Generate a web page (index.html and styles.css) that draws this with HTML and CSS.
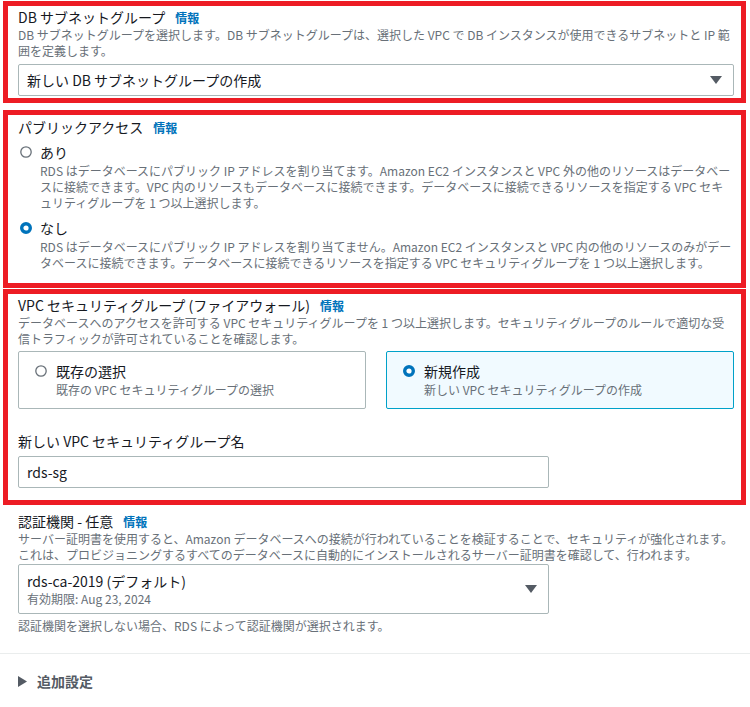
FILE: index.html
```html
<!DOCTYPE html>
<html lang="ja">
<head>
<meta charset="utf-8">
<title>接続</title>
<link rel="stylesheet" href="styles.css">
</head>
<body>
<div class="page">
  <section class="field hl hl-subnet">
    <div class="label">DB サブネットグループ<a class="info">情報</a></div>
    <div class="desc">DB サブネットグループを選択します。DB サブネットグループは、選択した VPC で DB インスタンスが使用できるサブネットと IP 範囲を定義します。</div>
    <div class="select select-wide">
      <span class="value">新しい DB サブネットグループの作成</span>
      <svg class="caret" width="12" height="8" viewBox="0 0 12 8"><polygon points="0,0 12,0 6,8" fill="#545b64"/></svg>
    </div>
  </section>

  <section class="field hl hl-public">
    <div class="label">パブリックアクセス<a class="info">情報</a></div>
    <div class="radio radio-first">
      <svg class="radio-icon" width="12" height="12" viewBox="0 0 12 12"><circle cx="6" cy="6" r="5.2" fill="#fff" stroke="#687078" stroke-width="1.3"/></svg>
      <div class="radio-body">
        <div class="radio-label">あり</div>
        <div class="desc radio-desc">RDS はデータベースにパブリック IP アドレスを割り当てます。Amazon EC2 インスタンスと VPC 外の他のリソースはデータベースに接続できます。VPC 内のリソースもデータベースに接続できます。データベースに接続できるリソースを指定する VPC セキュリティグループを 1 つ以上選択します。</div>
      </div>
    </div>
    <div class="radio radio-next">
      <svg class="radio-icon" width="12" height="12" viewBox="0 0 12 12"><circle cx="6" cy="6" r="4.3" fill="#fff" stroke="#0073bb" stroke-width="3.4"/></svg>
      <div class="radio-body">
        <div class="radio-label">なし</div>
        <div class="desc radio-desc">RDS はデータベースにパブリック IP アドレスを割り当てません。Amazon EC2 インスタンスと VPC 内の他のリソースのみがデータベースに接続できます。データベースに接続できるリソースを指定する VPC セキュリティグループを 1 つ以上選択します。</div>
      </div>
    </div>
  </section>

  <section class="field hl hl-sg">
    <div class="label">VPC セキュリティグループ (ファイアウォール)<a class="info">情報</a></div>
    <div class="desc">データベースへのアクセスを許可する VPC セキュリティグループを 1 つ以上選択します。セキュリティグループのルールで適切な受信トラフィックが許可されていることを確認します。</div>
    <div class="tiles">
      <div class="tile">
        <svg class="radio-icon" width="12" height="12" viewBox="0 0 12 12"><circle cx="6" cy="6" r="5.2" fill="#fff" stroke="#687078" stroke-width="1.3"/></svg>
        <div class="radio-body">
          <div class="radio-label">既存の選択</div>
          <div class="tile-desc">既存の VPC セキュリティグループの選択</div>
        </div>
      </div>
      <div class="tile tile-selected">
        <svg class="radio-icon" width="12" height="12" viewBox="0 0 12 12"><circle cx="6" cy="6" r="4.3" fill="#fff" stroke="#0073bb" stroke-width="3.4"/></svg>
        <div class="radio-body">
          <div class="radio-label">新規作成</div>
          <div class="tile-desc">新しい VPC セキュリティグループの作成</div>
        </div>
      </div>
    </div>
    <div class="label label-sub">新しい VPC セキュリティグループ名</div>
    <div class="input">rds-sg</div>
  </section>

  <section class="field plain">
    <div class="label">認証機関 - 任意<a class="info">情報</a></div>
    <div class="desc">サーバー証明書を使用すると、Amazon データベースへの接続が行われていることを検証することで、セキュリティが強化されます。<br>これは、プロビジョニングするすべてのデータベースに自動的にインストールされるサーバー証明書を確認して、行われます。</div>
    <div class="select select-ca">
      <div class="select-text">
        <div class="value">rds-ca-2019 (デフォルト)</div>
        <div class="value-sub">有効期限: Aug 23, 2024</div>
      </div>
      <svg class="caret" width="12" height="8" viewBox="0 0 12 8"><polygon points="0,0 12,0 6,8" fill="#545b64"/></svg>
    </div>
    <div class="constraint">認証機関を選択しない場合、RDS によって認証機関が選択されます。</div>
  </section>

  <div class="expander">
    <svg class="expander-icon" width="9" height="11" viewBox="0 0 9 11"><polygon points="0,0 9,5.5 0,11" fill="#545b64"/></svg>
    <span class="expander-label">追加設定</span>
  </div>
</div>
</body>
</html>
```

FILE: styles.css
```css
* {
  box-sizing: border-box;
}

html, body {
  margin: 0;
  padding: 0;
  background: #ffffff;
}

body {
  font-family: "Noto Sans CJK JP", "Noto Sans", sans-serif;
  font-size: 14px;
  color: #16191f;
  width: 750px;
  height: 707px;
  overflow: hidden;
}

.page {
  display: flex;
  flex-direction: column;
  padding-top: 1px;
}

.field {
  display: flex;
  flex-direction: column;
}

.hl {
  border: 5px solid #ed1c24;
  margin: 0 4px 0 3px;
  padding: 1px 7px 2px 10px;
}

.hl-public {
  margin-top: 7px;
  padding-top: 2px;
  padding-bottom: 12px;
}

.hl-sg {
  margin-top: 1px;
  padding-bottom: 12px;
}

.plain {
  padding: 6px 16px 0 18px;
}

.label {
  display: block;
  font-size: 14px;
  line-height: 20px;
  height: 20px;
  color: #16191f;
}

.info {
  font-size: 12px;
  line-height: 16px;
  font-weight: 700;
  color: #0073bb;
  margin-left: 10px;
  text-decoration: none;
}

.desc {
  font-size: 12px;
  line-height: 16px;
  color: #687078;
}

.select {
  display: flex;
  align-items: center;
  justify-content: space-between;
  border: 1px solid #aab7b8;
  border-radius: 2px;
  background: #fff;
  padding: 0 11px 0 8px;
}

.select-wide {
  margin-top: 5px;
  height: 32px;
}

.select-wide .value {
  font-size: 14px;
  line-height: 20px;
}

.caret {
  display: block;
  flex: none;
}

.radio {
  display: flex;
  align-items: flex-start;
  padding-left: 2px;
}

.radio-first {
  margin-top: 5px;
}

.radio-next {
  margin-top: 7px;
}

.radio-icon {
  flex: none;
  margin-top: 4px;
  display: block;
}

.radio-body {
  margin-left: 8px;
  display: flex;
  flex-direction: column;
  min-width: 0;
}

.radio-label {
  font-size: 14px;
  line-height: 20px;
}

.radio-desc {
  margin-top: 1px;
}

.tiles {
  display: grid;
  grid-template-columns: 1fr 1fr;
  gap: 20px;
  margin-top: 4px;
}

.tile {
  display: flex;
  align-items: flex-start;
  height: 58px;
  border: 1px solid #aab7b8;
  border-radius: 2px;
  padding: 9px 16px 0 16px;
  background: #fff;
}

.tile-selected {
  border-color: #00a1c9;
  background: #f1faff;
}

.tile .radio-body {
  margin-left: 9px;
}

.tile-desc {
  font-size: 12px;
  line-height: 18px;
  color: #687078;
}

.label-sub {
  margin-top: 22px;
}

.input {
  margin-top: 5px;
  width: 531px;
  height: 32px;
  border: 1px solid #aab7b8;
  border-radius: 2px;
  padding: 0 8px;
  font-size: 14px;
  line-height: 30px;
  color: #16191f;
}

.select-ca {
  margin-top: 1px;
  width: 531px;
  height: 50px;
  padding: 0 11px 0 8px;
}

.select-text {
  display: flex;
  flex-direction: column;
}

.select-ca .value {
  font-size: 14px;
  line-height: 20px;
}

.value-sub {
  font-size: 12px;
  line-height: 16px;
  color: #687078;
}

.constraint {
  margin-top: 4px;
  font-size: 12px;
  line-height: 16px;
  color: #687078;
}

.expander {
  margin-top: 19px;
  border-top: 1px solid #eaeded;
  display: flex;
  align-items: flex-start;
  padding: 17px 0 0 18px;
  height: 59px;
}

.expander-icon {
  display: block;
  margin-top: 5px;
}

.expander-label {
  margin-left: 10px;
  font-size: 14px;
  line-height: 20px;
  font-weight: 700;
  color: #545b64;
}
```
